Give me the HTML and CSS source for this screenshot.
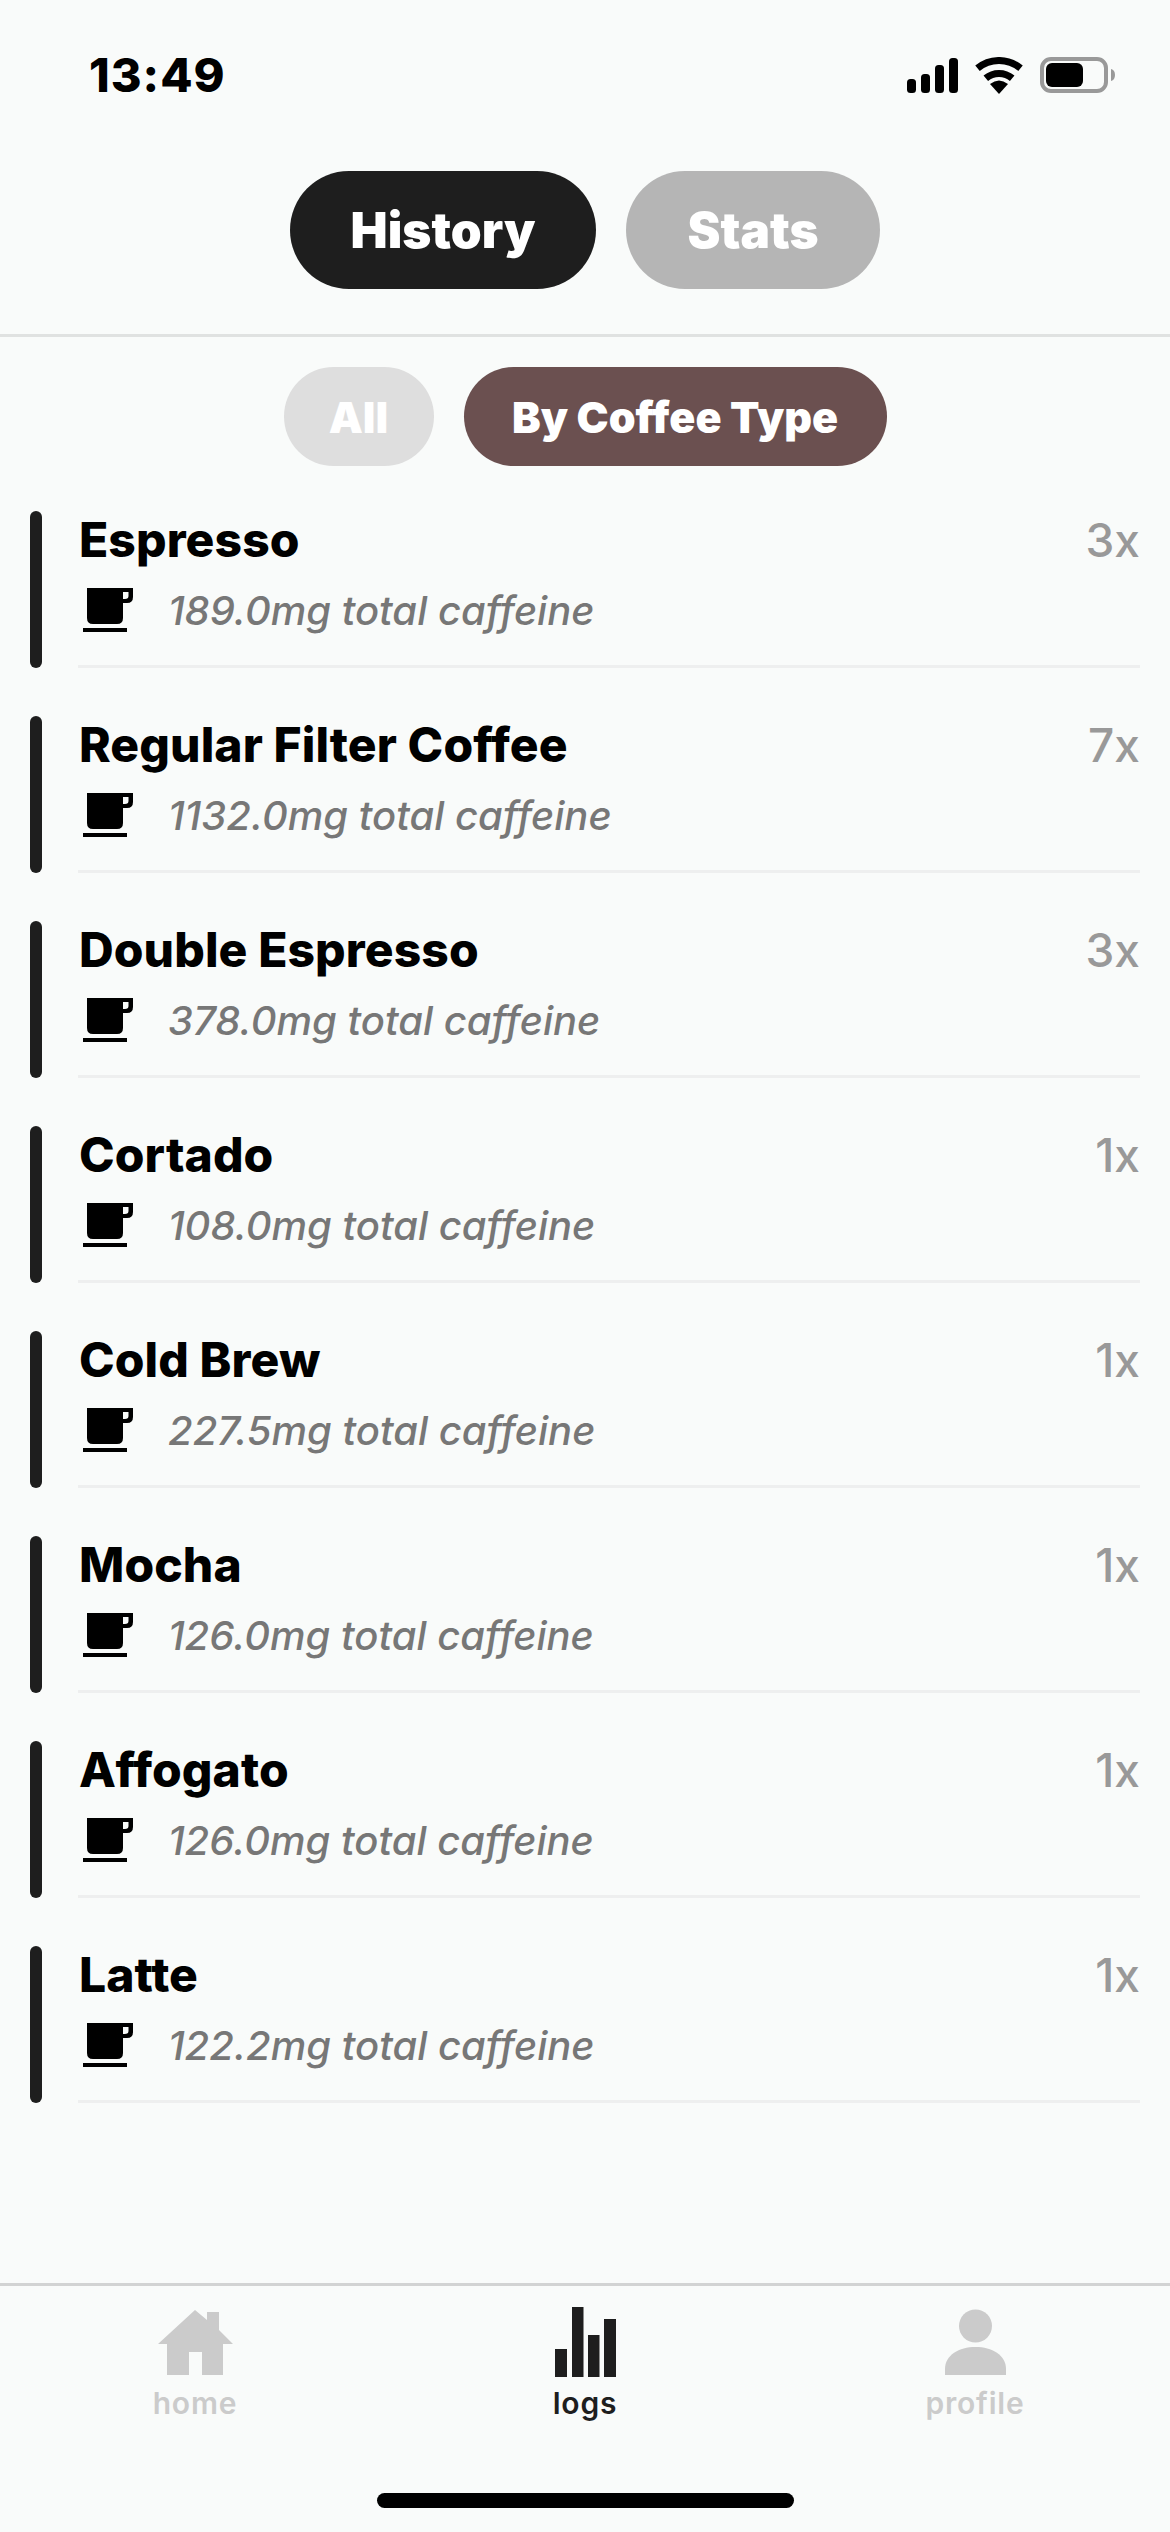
FILE: index.html
```html
<!DOCTYPE html>
<html lang="en">
<head>
<meta charset="utf-8">
<title>Logs</title>
<link rel="stylesheet" href="styles.css">
</head>
<body>
<svg class="defs" width="0" height="0" aria-hidden="true">
  <symbol id="cup" viewBox="0 0 50 44">
    <path fill-rule="evenodd" d="M4 0H50V9Q50 15 44 15H40V30Q40 36 34 36H10Q4 36 4 30ZM40 4H45.5V8Q45.5 11 42 11H40Z"/>
    <rect x="0" y="40" width="44" height="4"/>
  </symbol>
</svg>
<div class="screen">
  <header class="status">
    <span class="time">13:49</span>
    <div class="status-icons">
      <svg class="signal" width="51" height="35" viewBox="0 0 51 35">
        <rect x="0" y="21" width="9" height="14" rx="3.5"/>
        <rect x="14" y="16" width="9" height="19" rx="3.5"/>
        <rect x="28" y="7" width="9" height="28" rx="3.5"/>
        <rect x="42" y="0" width="9" height="35" rx="3.5"/>
      </svg>
      <svg class="wifi" width="48" height="37" viewBox="0 0 48 37">
        <path class="arc" d="M2.5 11.3A33.5 33.5 0 0 1 45.5 11.3"/>
        <path class="arc" d="M10.8 21.3A20.5 20.5 0 0 1 37.2 21.3"/>
        <path d="M24 37L15 27Q24 20 33 27Z"/>
      </svg>
      <svg class="battery" width="75" height="36" viewBox="0 0 75 36">
        <rect class="shell" x="2" y="2" width="64" height="32" rx="9"/>
        <rect x="6" y="6" width="37" height="24" rx="6"/>
        <path class="tip" d="M71 12Q75 13 75 18Q75 23 71 24Z"/>
      </svg>
    </div>
  </header>

  <nav class="tabs">
    <span class="pill pill-lg pill-dark">History</span>
    <span class="pill pill-lg pill-grey">Stats</span>
  </nav>

  <div class="filters">
    <span class="pill pill-sm pill-light">All</span>
    <span class="pill pill-sm pill-brown">By Coffee Type</span>
  </div>

  <ul class="list">
    <li class="row"><span class="bar"></span><div class="row-body"><div class="row-text"><h2 class="name">Espresso</h2><p class="sub"><svg class="cup"><use href="#cup"/></svg>189.0mg total caffeine</p></div><span class="count">3x</span></div></li>
    <li class="row"><span class="bar"></span><div class="row-body"><div class="row-text"><h2 class="name">Regular Filter Coffee</h2><p class="sub"><svg class="cup"><use href="#cup"/></svg>1132.0mg total caffeine</p></div><span class="count">7x</span></div></li>
    <li class="row"><span class="bar"></span><div class="row-body"><div class="row-text"><h2 class="name">Double Espresso</h2><p class="sub"><svg class="cup"><use href="#cup"/></svg>378.0mg total caffeine</p></div><span class="count">3x</span></div></li>
    <li class="row"><span class="bar"></span><div class="row-body"><div class="row-text"><h2 class="name">Cortado</h2><p class="sub"><svg class="cup"><use href="#cup"/></svg>108.0mg total caffeine</p></div><span class="count">1x</span></div></li>
    <li class="row"><span class="bar"></span><div class="row-body"><div class="row-text"><h2 class="name">Cold Brew</h2><p class="sub"><svg class="cup"><use href="#cup"/></svg>227.5mg total caffeine</p></div><span class="count">1x</span></div></li>
    <li class="row"><span class="bar"></span><div class="row-body"><div class="row-text"><h2 class="name">Mocha</h2><p class="sub"><svg class="cup"><use href="#cup"/></svg>126.0mg total caffeine</p></div><span class="count">1x</span></div></li>
    <li class="row"><span class="bar"></span><div class="row-body"><div class="row-text"><h2 class="name">Affogato</h2><p class="sub"><svg class="cup"><use href="#cup"/></svg>126.0mg total caffeine</p></div><span class="count">1x</span></div></li>
    <li class="row"><span class="bar"></span><div class="row-body"><div class="row-text"><h2 class="name">Latte</h2><p class="sub"><svg class="cup"><use href="#cup"/></svg>122.2mg total caffeine</p></div><span class="count">1x</span></div></li>
  </ul>

  <footer class="nav">
    <div class="nav-item">
      <svg class="nav-icon" width="80" height="70" viewBox="0 0 80 70"><path d="M40 3L52 13V5H64V23L78 37H68V68H47V45H34V68H12V37H3Z"/></svg>
      <span class="nav-label">home</span>
    </div>
    <div class="nav-item nav-active">
      <svg class="nav-icon" width="80" height="70" viewBox="0 0 80 70">
        <rect x="10" y="42" width="12" height="28"/>
        <rect x="27" y="0" width="11.5" height="70"/>
        <rect x="43" y="28" width="11.5" height="42"/>
        <rect x="59" y="12" width="12" height="58"/>
      </svg>
      <span class="nav-label">logs</span>
    </div>
    <div class="nav-item">
      <svg class="nav-icon" width="80" height="70" viewBox="0 0 80 70">
        <circle cx="40.5" cy="19" r="16.5"/>
        <path d="M10 68V62C10 48 24 40 40.5 40C57 40 71 48 71 62V68Z"/>
      </svg>
      <span class="nav-label">profile</span>
    </div>
  </footer>
  <div class="home-wrap"><div class="home-indicator"></div></div>
</div>
</body>
</html>
```

FILE: styles.css
```css
* { box-sizing: border-box; }
html, body { margin: 0; padding: 0; }
body { background: #f9fbfa; font-family: Inter, "Liberation Sans", sans-serif; }
.defs { display: block; height: 0; }
.screen { width: 1170px; height: 2532px; display: flex; flex-direction: column; overflow: hidden; }

.status { display: flex; justify-content: space-between; align-items: center; height: 103px; padding: 47px 55px 0 89px; }
.time { font-size: 47px; line-height: 56px; font-weight: 800; letter-spacing: 1px; color: #000; }
.status-icons { display: flex; align-items: center; gap: 17px; }
.status-icons svg { display: block; }
.arc { fill: none; stroke: #000; stroke-width: 7; }
.shell { fill: none; stroke: #999; stroke-width: 4; }
.tip { fill: #999; }

.tabs { display: flex; justify-content: center; gap: 30px; padding: 68px 0 45px; border-bottom: 3px solid #e0e2e1; }
.pill { display: flex; align-items: center; justify-content: center; border-radius: 60px; color: #fff; font-weight: 900; }
.pill-lg { width: 306px; height: 118px; font-size: 49.5px; }
.pill-lg.pill-grey { width: 254px; }
.pill-sm { width: 423px; height: 99px; font-size: 43px; }
.pill-sm.pill-light { width: 150px; }
.pill-dark { background: #1e1e1e; }
.pill-grey { background: #b5b5b5; }
.pill-light { background: #dedede; }
.pill-brown { background: #6b5050; }
.filters { display: flex; justify-content: center; gap: 30px; margin-top: 30px; }

.list { list-style: none; margin: 45px 0 0; padding: 0 30px; display: flex; flex-direction: column; gap: 48px; }
.row { display: flex; height: 157px; }
.bar { width: 12px; border-radius: 6px; background: #1e1e1e; }
.row-body { flex: 1; margin-left: 36px; display: flex; justify-content: space-between; align-items: flex-start; border-bottom: 3px solid #eeefef; padding-top: 1px; }
.name { margin: 0 0 0 1px; font-size: 48px; line-height: 56px; font-weight: 800; letter-spacing: 0.1px; color: #000; }
.sub { display: flex; margin: 20px 0 0; font-size: 40px; line-height: 46px; font-style: italic; font-weight: 500; color: #777; }
.cup { width: 50px; height: 44px; margin: 0 35px 0 5px; flex: none; }
.count { font-size: 46px; line-height: 56px; font-weight: 500; color: #999; }

.nav { margin-top: auto; display: grid; grid-template-columns: repeat(3, 390px); border-top: 3px solid #d2d3d3; padding-top: 21px; }
.nav-item { display: flex; flex-direction: column; align-items: center; color: #cbcbcb; }
.nav-icon { display: block; fill: currentColor; }
.nav-label { margin-top: 8px; font-size: 30px; line-height: 36px; font-weight: 600; letter-spacing: 0.8px; }
.nav-active { color: #1e1e1e; }

.home-wrap { display: flex; justify-content: center; padding: 72px 0 24px; }
.home-indicator { width: 417px; height: 15px; border-radius: 8px; background: #000; }
```
